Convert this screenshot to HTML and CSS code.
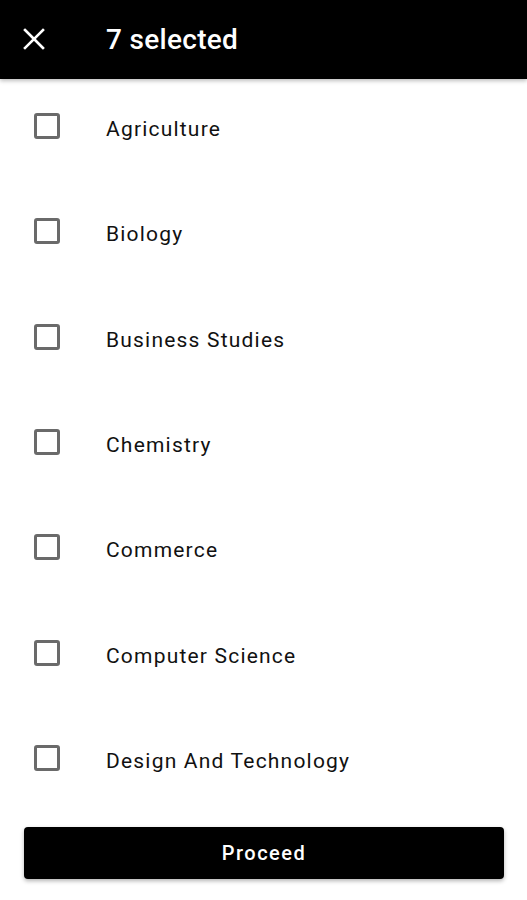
FILE: index.html
```html
<!DOCTYPE html>
<html>
<head>
<meta charset="utf-8">
<link rel="stylesheet" href="styles.css">
</head>
<body>
<header class="appbar">
  <button class="close" aria-label="Close">
    <svg width="22" height="22" viewBox="0 0 22 22"><path d="M2 2 L20 20 M20 2 L2 20" stroke="#fff" stroke-width="2.6" stroke-linecap="square"/></svg>
  </button>
  <h1 class="title">7 selected</h1>
</header>
<main class="list">
  <label class="row"><span class="box"></span><span class="label">Agriculture</span></label>
  <label class="row"><span class="box"></span><span class="label">Biology</span></label>
  <label class="row"><span class="box"></span><span class="label">Business Studies</span></label>
  <label class="row"><span class="box"></span><span class="label">Chemistry</span></label>
  <label class="row"><span class="box"></span><span class="label">Commerce</span></label>
  <label class="row"><span class="box"></span><span class="label">Computer Science</span></label>
  <label class="row"><span class="box"></span><span class="label">Design And Technology</span></label>
</main>
<div class="footer">
  <button class="proceed">Proceed</button>
</div>
</body>
</html>
```
FILE: styles.css
```css
html, body {
  margin: 0;
  padding: 0;
  background: #fff;
  font-family: Roboto, "Noto Sans", sans-serif;
  width: 527px;
  height: 900px;
  overflow: hidden;
}
.appbar {
  height: 79px;
  background: #000;
  display: flex;
  align-items: center;
  box-shadow: 0 2px 4px rgba(0,0,0,0.25);
  position: relative;
  z-index: 1;
}
.close {
  background: none;
  border: 0;
  padding: 0;
  margin-left: 23px;
  width: 22px;
  height: 22px;
  display: flex;
  margin-top: -2px;
}
.title {
  margin: 0 0 0 61px;
  color: #fff;
  font-size: 28px;
  font-weight: 500;
  letter-spacing: 0.3px;
  margin-top: -1px;
}
.list {
  display: flex;
  flex-direction: column;
}
.row {
  height: 105.33px;
  box-sizing: border-box;
  padding-top: 34px;
  display: flex;
  align-items: flex-start;
}
.box {
  width: 26px;
  height: 26px;
  box-sizing: border-box;
  border: 3px solid #6a6a6a;
  border-radius: 3px;
  margin-left: 34px;
  flex: none;
}
.label {
  margin-left: 46px;
  font-size: 21px;
  letter-spacing: 1.2px;
  color: #111;
  line-height: 26px;
  margin-top: 3px;
}
.footer {
  padding: 11px 23px 0 24px;
}
.proceed {
  width: 100%;
  height: 52px;
  background: #000;
  color: #fff;
  border: 0;
  border-radius: 4px;
  font-family: Roboto, sans-serif;
  font-size: 20px;
  font-weight: 500;
  letter-spacing: 1.5px;
  box-shadow: 0 2px 4px rgba(0,0,0,0.3);
}
```
